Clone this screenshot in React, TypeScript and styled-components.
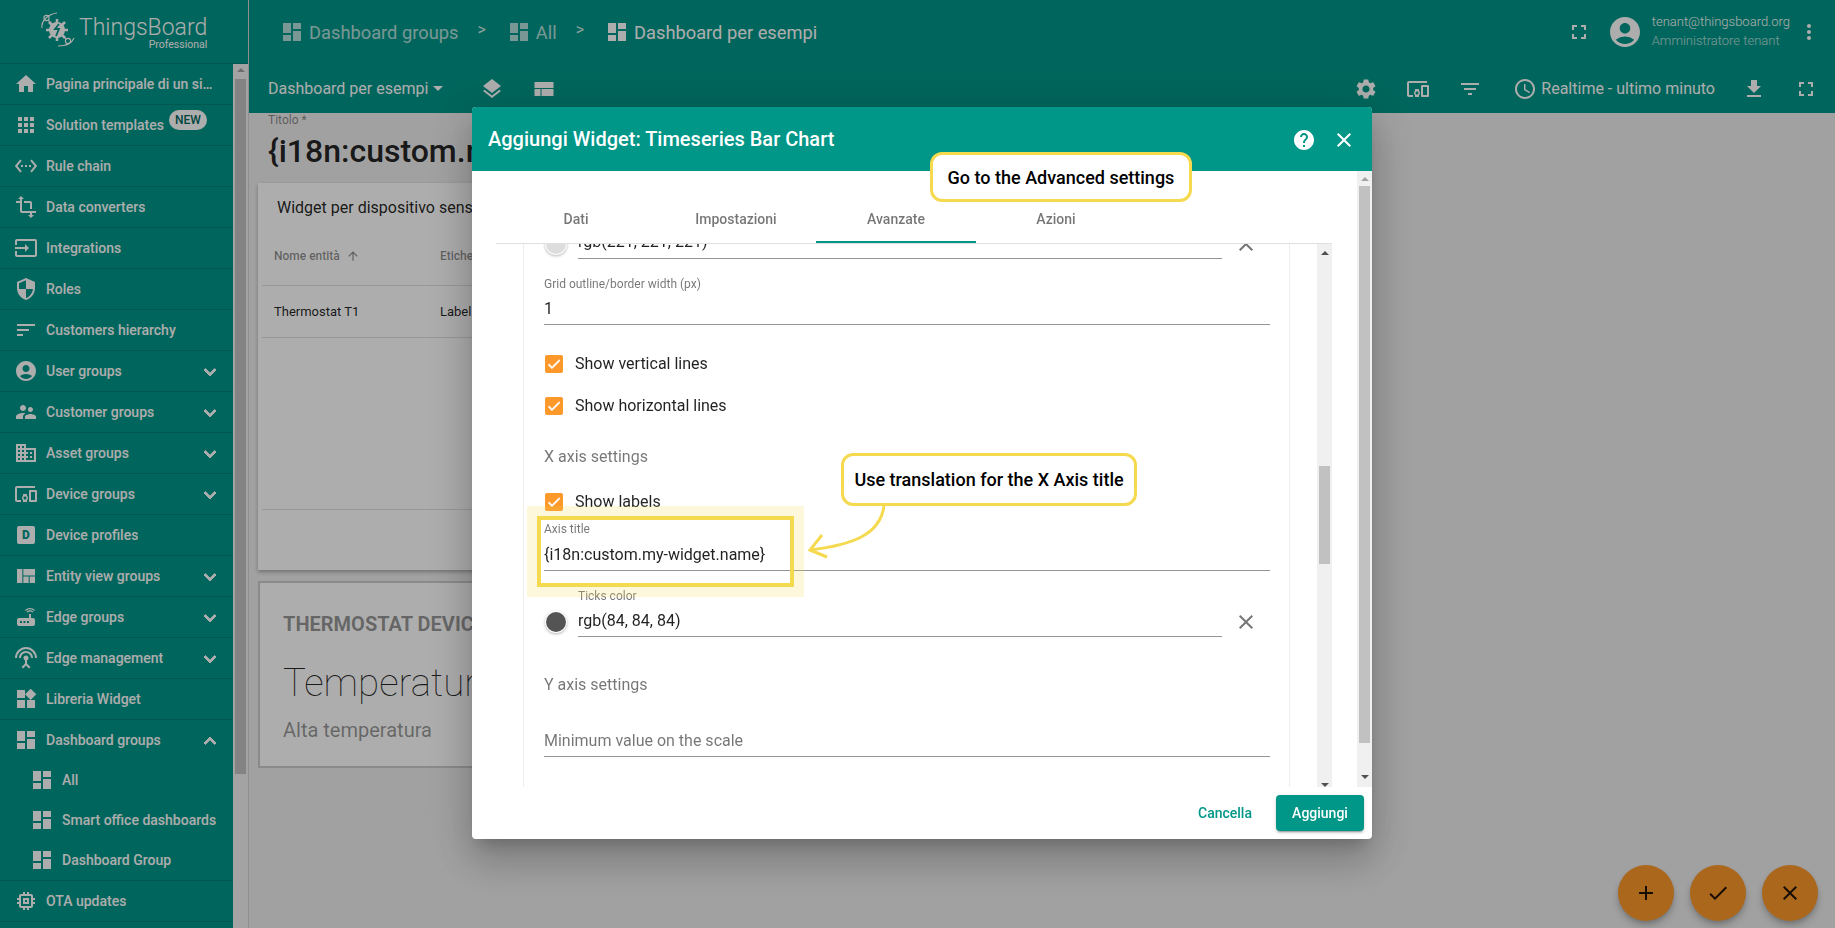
import React from 'react';
import styled, { createGlobalStyle } from 'styled-components';
import {
  MdAccessTime,
  MdAccountCircle,
  MdAdd,
  MdApps,
  MdArrowUpward,
  MdCheck,
  MdClose,
  MdDashboard,
  MdDevicesOther,
  MdDomain,
  MdExpandLess,
  MdExpandMore,
  MdFileDownload,
  MdFilterList,
  MdFullscreen,
  MdHelp,
  MdHome,
  MdInput,
  MdLayers,
  MdMemory,
  MdMoreVert,
  MdRouter,
  MdSecurity,
  MdSettings,
  MdSettingsEthernet,
  MdSettingsInputAntenna,
  MdSort,
  MdSupervisorAccount,
  MdTransform,
  MdViewQuilt,
  MdWidgets,
} from 'react-icons/md';

const GlobalStyle = createGlobalStyle`
  html, body {
    margin: 0;
    height: 100%;
    overflow: hidden;
    font-family: Roboto, "Liberation Sans", sans-serif;
    background: #eeeeee;
  }
  * { box-sizing: border-box; }
`;

const Page = styled.div`
  display: flex;
  width: 1835px;
  height: 928px;
  overflow: hidden;
  position: relative;
`;

/* sidebar */

const Sidebar = styled.aside`
  width: 249px;
  flex: none;
  display: flex;
  flex-direction: column;
  border-right: 1px solid rgba(0, 0, 0, 0.12);
`;

const LogoBar = styled.div`
  height: 64px;
  flex: none;
  background: #009688;
  border-bottom: 1px solid rgba(0, 0, 0, 0.12);
  display: flex;
  align-items: flex-start;
  padding: 11px 0 0 40px;
  color: #fff;
`;

const LogoText = styled.div`
  margin: 4px 0 0 3px;
  display: flex;
  flex-direction: column;
  align-items: flex-end;
`;

const LogoName = styled.span`
  font-size: 23px;
  font-weight: 300;
  line-height: 26px;
`;

const LogoEdition = styled.span`
  font-size: 10.5px;
  line-height: 12px;
  margin-top: -2px;
`;

const SideBody = styled.div`
  flex: 1;
  display: flex;
  min-height: 0;
`;

const Nav = styled.nav`
  width: 233px;
  flex: none;
  background: #009688;
`;

const NavRow = styled.div<{ $open?: boolean }>`
  height: ${(p) => (p.$open ? 40 : 41)}px;
  display: flex;
  align-items: center;
  border-bottom: ${(p) => (p.$open ? 'none' : '1px solid rgba(0, 0, 0, 0.12)')};
  padding-left: 14px;
  color: #fff;
  font-size: 14px;
  font-weight: 500;
  position: relative;
`;

const NavLabel = styled.span`
  margin-left: 8px;
  white-space: nowrap;
  overflow: hidden;
  text-overflow: ellipsis;
  max-width: 167px;
`;

const NavChevron = styled.span`
  position: absolute;
  right: 11px;
  top: 9px;
  display: flex;

  path:not([fill='none']) {
    stroke: currentColor;
    stroke-width: 1;
  }
`;

const SubList = styled.div`
  border-bottom: 1px solid rgba(0, 0, 0, 0.12);
`;

const SubRow = styled.div`
  height: 40px;
  display: flex;
  align-items: center;
  padding-left: 30px;
  color: #fff;
  font-size: 14px;
  font-weight: 500;
`;

const NewBadge = styled.span`
  position: absolute;
  left: 169px;
  top: 5px;
  width: 38px;
  height: 20px;
  border-radius: 10px;
  background: #fff;
  color: #00665c;
  font-size: 12px;
  line-height: 20px;
  text-align: center;
`;

const ProfileBox = styled.span`
  width: 18px;
  height: 18px;
  margin: 3px;
  flex: none;
  border-radius: 2px;
  background: #fff;
  color: #009688;
  font-size: 12px;
  font-weight: 900;
  line-height: 18px;
  text-align: center;
`;

const SideScroll = styled.div`
  width: 15px;
  flex: none;
  background: #f1f1f1;
  padding: 4px 2px 0;
  display: flex;
  flex-direction: column;
  align-items: center;
`;

const ArrowUp = styled.span<{ $color?: string }>`
  width: 0;
  height: 0;
  border-left: 4px solid transparent;
  border-right: 4px solid transparent;
  border-bottom: 4px solid ${(p) => p.$color ?? '#a3a3a3'};
`;

const ArrowDown = styled.span<{ $color?: string }>`
  width: 0;
  height: 0;
  border-left: 4px solid transparent;
  border-right: 4px solid transparent;
  border-top: 4px solid ${(p) => p.$color ?? '#505050'};
`;

const SideThumb = styled.div`
  width: 11px;
  height: 695px;
  margin-top: 7px;
  background: #c1c1c1;
`;

/* top bars */

const Main = styled.main`
  flex: 1;
  min-width: 0;
  display: flex;
  flex-direction: column;
`;

const TopBar = styled.header`
  height: 64px;
  flex: none;
  background: #009688;
  color: #fff;
  display: flex;
  align-items: center;
  padding: 0 14px 0 31px;
`;

const Crumb = styled.span<{ $current?: boolean }>`
  display: flex;
  align-items: center;
  gap: 5px;
  font-size: 18.3px;
  opacity: ${(p) => (p.$current ? 1 : 0.7)};
`;

const CrumbSep = styled.span`
  font-size: 16px;
  margin: -6px 21px 0 19px;
  opacity: 0.8;
`;

const Spacer = styled.div`
  flex: 1;
`;

const UserBox = styled.div`
  display: flex;
  flex-direction: column;
  gap: 4px;
  margin: -3px 7px 0 9px;
  font-size: 13px;
  font-weight: 300;
  line-height: 15px;
`;

const UserRole = styled.span`
  opacity: 0.7;
  font-size: 13px;
`;

const IconSlot = styled.span<{ $gap?: number; $drop?: number }>`
  display: flex;
  margin-left: ${(p) => p.$gap ?? 0}px;
  margin-top: ${(p) => p.$drop ?? 0}px;
`;

const ToolBar = styled.div`
  height: 49px;
  flex: none;
  background: #009688;
  color: #fff;
  display: flex;
  align-items: center;
  padding: 0 17px 0 19px;
  font-size: 16px;
`;

const Caret = styled.span`
  width: 0;
  height: 0;
  margin-left: 5px;
  border-left: 5px solid transparent;
  border-right: 5px solid transparent;
  border-top: 5px solid #fff;
`;

/* page behind the dialog */

const Content = styled.div`
  flex: 1;
  padding: 0 0 0 9px;
  background: #eeeeee;
  min-height: 0;
`;

const TitleLabel = styled.div`
  margin: 0 0 0 10px;
  height: 14px;
  font-size: 12px;
  line-height: 14px;
  color: rgba(0, 0, 0, 0.45);
`;

const BigTitle = styled.div`
  margin: 3px 0 0 10px;
  height: 42px;
  font-size: 32px;
  font-weight: 500;
  line-height: 42px;
  color: rgba(0, 0, 0, 0.87);
  white-space: nowrap;
`;

const TableCard = styled.section`
  width: 520px;
  height: 387px;
  margin-top: 11px;
  background: #fff;
  box-shadow: 0 2px 4px rgba(0, 0, 0, 0.3);
  display: flex;
  flex-direction: column;
`;

const CardTitle = styled.div`
  padding: 15px 0 0 19px;
  height: 50px;
  font-size: 16px;
  line-height: 20px;
  color: rgba(0, 0, 0, 0.87);
`;

const TableLine = styled.div<{ $h: number; $muted?: boolean }>`
  height: ${(p) => p.$h}px;
  margin-left: 4px;
  padding-left: 12px;
  padding-bottom: ${(p) => (p.$muted ? 6 : 0)}px;
  display: flex;
  align-items: center;
  border-bottom: 1px solid rgba(0, 0, 0, 0.12);
  font-size: ${(p) => (p.$muted ? 12 : 13)}px;
  font-weight: ${(p) => (p.$muted ? 500 : 400)};
  color: ${(p) => (p.$muted ? 'rgba(0, 0, 0, 0.45)' : 'rgba(0, 0, 0, 0.87)')};
`;

const TableCell = styled.span`
  width: 166px;
  display: flex;
  align-items: center;
  gap: 6px;
`;

const ValueCard = styled.section`
  width: 520px;
  height: 187px;
  margin-top: 11px;
  border: 2px solid rgba(0, 0, 0, 0.2);
  background: #fff;
  padding: 27px 0 0 23px;
  white-space: nowrap;
`;

const ValueHeading = styled.div`
  font-size: 20px;
  font-weight: 700;
  line-height: 28px;
  color: rgba(0, 0, 0, 0.42);
`;

const ValueNumber = styled.div`
  margin-top: 20px;
  font-size: 38.5px;
  font-weight: 100;
  line-height: 50px;
  color: rgba(0, 0, 0, 0.87);
`;

const ValueNote = styled.div`
  margin-top: 8px;
  font-size: 20px;
  line-height: 28px;
  color: rgba(0, 0, 0, 0.42);
`;

const FabGroup = styled.div`
  position: absolute;
  right: 17px;
  bottom: 7px;
  display: flex;
  gap: 16px;
`;

const Fab = styled.button`
  width: 56px;
  height: 56px;
  padding: 0;
  border: 0;
  border-radius: 50%;
  background: #fd982a;
  color: rgba(0, 0, 0, 0.87);
  display: flex;
  align-items: center;
  justify-content: center;
  box-shadow: 0 3px 5px -1px rgba(0, 0, 0, 0.2), 0 6px 10px rgba(0, 0, 0, 0.14);
`;

/* dialog */

const Backdrop = styled.div`
  position: fixed;
  inset: 0;
  background: rgba(0, 0, 0, 0.32);
  padding: 18px 0 0 9px;
  display: flex;
  align-items: center;
  justify-content: center;
`;

const Dialog = styled.div`
  position: relative;
  width: 900px;
  height: 732px;
  display: flex;
  flex-direction: column;
  background: #fff;
  border-radius: 4px;
  box-shadow: 0 11px 15px -7px rgba(0, 0, 0, 0.2), 0 24px 38px 3px rgba(0, 0, 0, 0.14),
    0 9px 46px 8px rgba(0, 0, 0, 0.12);
`;

const DialogHeader = styled.div`
  height: 64px;
  flex: none;
  background: #009688;
  color: #fff;
  border-radius: 4px 4px 0 0;
  display: flex;
  align-items: center;
  padding: 0 16px;
  font-size: 20px;
  font-weight: 500;
`;

const DialogTitle = styled.span`
  flex: 1;
`;

const DialogBody = styled.div`
  height: 616px;
  flex: none;
  display: flex;
`;

const BodyColumn = styled.div`
  width: 885px;
  flex: none;
  padding: 0 25px 0 24px;
  display: flex;
  flex-direction: column;
`;

const TabBar = styled.div`
  height: 73px;
  flex: none;
  padding-top: 24px;
  display: flex;
  border-bottom: 1px solid #e0e0e0;
`;

const Tab = styled.div<{ $active?: boolean }>`
  width: 160px;
  height: 48px;
  padding-top: 2px;
  display: flex;
  align-items: center;
  justify-content: center;
  font-size: 14px;
  font-weight: 500;
  color: rgba(0, 0, 0, 0.54);
  border-bottom: 2px solid ${(p) => (p.$active ? '#009688' : 'transparent')};
`;

const TabPane = styled.div`
  flex: 1;
  min-height: 0;
  display: flex;
  justify-content: space-between;
  overflow: hidden;
  padding-left: 27px;
`;

const SettingsPanel = styled.div`
  width: 767px;
  border-left: 1px solid #eeeeee;
  border-right: 1px solid #eeeeee;
  padding: 0 19px 0 20px;
`;

const Field = styled.div<{ $top: number; $gap?: number }>`
  margin-top: ${(p) => p.$top}px;
  display: flex;
  flex-direction: column;
  gap: ${(p) => p.$gap ?? 5}px;
  flex: 1;
  border-bottom: 1px solid rgba(0, 0, 0, 0.42);
`;

const FieldLabel = styled.label`
  font-size: 12px;
  line-height: 14px;
  color: rgba(0, 0, 0, 0.54);
`;

const FieldValue = styled.div<{ $placeholder?: boolean; $tight?: boolean }>`
  height: ${(p) => (p.$tight ? 27 : 28)}px;
  font-size: 16px;
  line-height: 24px;
  color: ${(p) => (p.$placeholder ? 'rgba(0, 0, 0, 0.54)' : 'rgba(0, 0, 0, 0.87)')};
`;

const ColorRow = styled.div<{ $top: number }>`
  margin-top: ${(p) => p.$top}px;
  display: flex;
  align-items: flex-end;
  position: relative;
`;

const Swatch = styled.span<{ $color: string }>`
  width: 20px;
  height: 20px;
  flex: none;
  margin: 0 12px 5px 2px;
  border-radius: 50%;
  background: ${(p) => p.$color};
  box-shadow: 0 0 0 1px #fff, 0 1px 3px 1px rgba(0, 0, 0, 0.3);
`;

const ClearButton = styled.span`
  width: 48px;
  flex: none;
  margin-bottom: 3px;
  display: flex;
  justify-content: center;
  color: rgba(0, 0, 0, 0.54);
`;

const CheckRow = styled.div<{ $top: number }>`
  margin-top: ${(p) => p.$top}px;
  height: 18px;
  display: flex;
  align-items: center;
  gap: 12px;
  padding-left: 1px;
  font-size: 16px;
  color: rgba(0, 0, 0, 0.87);
`;

const CheckLabel = styled.span`
  margin-top: -2px;
`;

const CheckBox = styled.span`
  width: 18px;
  height: 18px;
  border-radius: 2px;
  background: #fd982a;
  color: #fff;
  display: flex;
  align-items: center;
  justify-content: center;

  path:not([fill='none']) {
    stroke: currentColor;
    stroke-width: 1;
  }
`;

const GroupTitle = styled.div<{ $top: number }>`
  margin-top: ${(p) => p.$top}px;
  font-size: 16px;
  line-height: 24px;
  color: rgba(0, 0, 0, 0.54);
`;

const InnerScroll = styled.div`
  width: 15px;
  flex: none;
  background: #f0f0f0;
  padding-top: 7px;
  display: flex;
  flex-direction: column;
  align-items: center;
  position: relative;
`;

const InnerThumb = styled.div`
  width: 11px;
  height: 98px;
  margin-top: 211px;
  background: #c1c1c1;
`;

const InnerDown = styled.div`
  margin-top: auto;
  display: flex;
`;

const OuterScroll = styled.div`
  width: 15px;
  flex: none;
  background: #f0f0f0;
  padding: 6px 0 8px;
  display: flex;
  flex-direction: column;
  align-items: center;
`;

const OuterThumb = styled.div`
  width: 11px;
  height: 557px;
  margin-top: 5px;
  background: #c1c1c1;
`;

const DialogFooter = styled.div`
  height: 52px;
  flex: none;
  display: flex;
  align-items: center;
  justify-content: flex-end;
  gap: 8px;
  padding: 0 8px;
`;

const TextButton = styled.button`
  height: 36px;
  padding: 0 16px;
  border: 0;
  background: transparent;
  color: #009688;
  font: 500 14px Roboto, sans-serif;
`;

const RaisedButton = styled.button`
  width: 88px;
  height: 36px;
  border: 0;
  border-radius: 4px;
  background: #009688;
  color: #fff;
  font: 500 14px Roboto, sans-serif;
  box-shadow: 0 3px 1px -2px rgba(0, 0, 0, 0.2), 0 2px 2px rgba(0, 0, 0, 0.14),
    0 1px 5px rgba(0, 0, 0, 0.12);
`;

/* tutorial marks painted over the dialog */

const Callout = styled.div<{ $left: number; $top: number; $w: number; $h: number }>`
  position: absolute;
  left: ${(p) => p.$left}px;
  top: ${(p) => p.$top}px;
  width: ${(p) => p.$w}px;
  height: ${(p) => p.$h}px;
  border: 3px solid #f5d94e;
  border-radius: 12px;
  background: #fff;
  color: #000;
  font-size: 18px;
  font-weight: 500;
  display: flex;
  align-items: center;
  justify-content: center;
  white-space: nowrap;
`;

const Highlight = styled.div`
  position: absolute;
  left: 65px;
  top: 409px;
  width: 257px;
  height: 71px;
  border: 4px solid #f5d94e;
  box-shadow: 0 0 0 10px rgba(245, 217, 78, 0.2);
  pointer-events: none;
`;

const ArrowMark = styled.svg`
  position: absolute;
  left: 330px;
  top: 396px;
  overflow: visible;
`;

const ThingsBoardMark = () => (
  <svg width="36" height="36" viewBox="0 0 36 36" fill="none" stroke="#fff">
    <path d="M2 17C1 10 8 3 17 2" strokeWidth="1.1" />
    <circle cx="6.5" cy="7" r="2.6" strokeWidth="1.1" />
    <path d="M34 27C32 32 26 35 18 35" strokeWidth="1.1" />
    <circle cx="28" cy="30" r="2.6" strokeWidth="1.1" />
    <path d="M8 9l4 4M26 28l-3-4" strokeWidth="1.1" />
    <circle cx="17" cy="19" r="8" fill="#fff" stroke="none" />
    <path
      d="M17 8v4M17 26v4M6 19h4M24 19h4M9 11l3 3M22 24l3 3M25 11l-3 3M12 24l-3 3"
      strokeWidth="2.6"
    />
    <path d="M19 13l-4 5h4l-3 7" stroke="#009688" strokeWidth="1.8" />
  </svg>
);

const LayoutIcon = () => (
  <svg width="24" height="24" viewBox="0 0 24 24" fill="currentColor">
    <rect x="2.5" y="5" width="19" height="6" />
    <rect x="2.5" y="12" width="6" height="7" />
    <rect x="9.5" y="12" width="12" height="7" />
  </svg>
);

const navTop = [
  { label: 'Pagina principale di un sistema', icon: <MdHome size={24} /> },
  { label: 'Solution templates', icon: <MdApps size={24} />, badge: true },
  { label: 'Rule chain', icon: <MdSettingsEthernet size={24} /> },
  { label: 'Data converters', icon: <MdTransform size={24} /> },
  { label: 'Integrations', icon: <MdInput size={24} /> },
  { label: 'Roles', icon: <MdSecurity size={24} /> },
  { label: 'Customers hierarchy', icon: <MdSort size={24} /> },
  { label: 'User groups', icon: <MdAccountCircle size={24} />, more: true },
  { label: 'Customer groups', icon: <MdSupervisorAccount size={24} />, more: true },
  { label: 'Asset groups', icon: <MdDomain size={24} />, more: true },
  { label: 'Device groups', icon: <MdDevicesOther size={24} />, more: true },
  { label: 'Device profiles', icon: <ProfileBox>D</ProfileBox> },
  { label: 'Entity view groups', icon: <MdViewQuilt size={24} />, more: true },
  { label: 'Edge groups', icon: <MdRouter size={24} />, more: true },
  { label: 'Edge management', icon: <MdSettingsInputAntenna size={24} />, more: true },
  { label: 'Libreria Widget', icon: <MdWidgets size={24} /> },
];

const subItems = ['All', 'Smart office dashboards', 'Dashboard Group'];

const App: React.FC = () => (
  <Page>
    <GlobalStyle />
    <Sidebar>
      <LogoBar>
        <ThingsBoardMark />
        <LogoText>
          <LogoName>ThingsBoard</LogoName>
          <LogoEdition>Professional</LogoEdition>
        </LogoText>
      </LogoBar>
      <SideBody>
        <Nav>
          {navTop.map((item) => (
            <NavRow key={item.label}>
              {item.icon}
              <NavLabel>{item.label}</NavLabel>
              {item.badge && <NewBadge>NEW</NewBadge>}
              {item.more && (
                <NavChevron>
                  <MdExpandMore size={24} />
                </NavChevron>
              )}
            </NavRow>
          ))}
          <NavRow $open>
            <MdDashboard size={24} />
            <NavLabel>Dashboard groups</NavLabel>
            <NavChevron>
              <MdExpandLess size={24} />
            </NavChevron>
          </NavRow>
          <SubList>
            {subItems.map((sub) => (
              <SubRow key={sub}>
                <MdDashboard size={24} />
                <NavLabel>{sub}</NavLabel>
              </SubRow>
            ))}
          </SubList>
          <NavRow>
            <MdMemory size={24} />
            <NavLabel>OTA updates</NavLabel>
          </NavRow>
        </Nav>
        <SideScroll>
          <ArrowUp />
          <SideThumb />
        </SideScroll>
      </SideBody>
    </Sidebar>

    <Main>
      <TopBar>
        <Crumb>
          <MdDashboard size={24} />
          Dashboard groups
        </Crumb>
        <CrumbSep>&gt;</CrumbSep>
        <Crumb>
          <MdDashboard size={24} />
          All
        </Crumb>
        <CrumbSep>&gt;</CrumbSep>
        <Crumb $current>
          <MdDashboard size={24} />
          Dashboard per esempi
        </Crumb>
        <Spacer />
        <MdFullscreen size={24} />
        <IconSlot $gap={16}>
          <MdAccountCircle size={36} />
        </IconSlot>
        <UserBox>
          <span>tenant@thingsboard.org</span>
          <UserRole>Amministratore tenant</UserRole>
        </UserBox>
        <MdMoreVert size={24} />
      </TopBar>
      <ToolBar>
        Dashboard per esempi
        <Caret />
        <IconSlot $gap={37}>
          <MdLayers size={24} />
        </IconSlot>
        <IconSlot $gap={28}>
          <LayoutIcon />
        </IconSlot>
        <Spacer />
        <MdSettings size={24} />
        <IconSlot $gap={28}>
          <MdDevicesOther size={24} />
        </IconSlot>
        <IconSlot $gap={28}>
          <MdFilterList size={24} />
        </IconSlot>
        <IconSlot $gap={31}>
          <MdAccessTime size={24} />
        </IconSlot>
        <IconSlot $gap={4}>Realtime - ultimo minuto</IconSlot>
        <IconSlot $gap={27}>
          <MdFileDownload size={24} />
        </IconSlot>
        <IconSlot $gap={28}>
          <MdFullscreen size={24} />
        </IconSlot>
      </ToolBar>
      <Content>
        <TitleLabel>Titolo *</TitleLabel>
        <BigTitle>{'{i18n:custom.my-widget.name}'}</BigTitle>
        <TableCard>
          <CardTitle>Widget per dispositivo sensore</CardTitle>
          <TableLine $h={53} $muted>
            <TableCell>
              Nome entità <MdArrowUpward size={14} />
            </TableCell>
            <TableCell>Etichetta</TableCell>
          </TableLine>
          <TableLine $h={52}>
            <TableCell>Thermostat T1</TableCell>
            <TableCell>Label</TableCell>
          </TableLine>
          <TableLine $h={172} />
        </TableCard>
        <ValueCard>
          <ValueHeading>THERMOSTAT DEVICE</ValueHeading>
          <ValueNumber>Temperatura</ValueNumber>
          <ValueNote>Alta temperatura</ValueNote>
        </ValueCard>
      </Content>
    </Main>

    <FabGroup>
      <Fab>
        <MdAdd size={24} />
      </Fab>
      <Fab>
        <MdCheck size={24} />
      </Fab>
      <Fab>
        <MdClose size={24} />
      </Fab>
    </FabGroup>

    <Backdrop>
      <Dialog>
        <DialogHeader>
          <DialogTitle>Aggiungi Widget: Timeseries Bar Chart</DialogTitle>
          <IconSlot $drop={2}>
            <MdHelp size={24} />
          </IconSlot>
          <IconSlot $gap={16} $drop={2}>
            <MdClose size={24} />
          </IconSlot>
        </DialogHeader>
        <DialogBody>
          <BodyColumn>
            <TabBar>
              <Tab>Dati</Tab>
              <Tab>Impostazioni</Tab>
              <Tab $active>Avanzate</Tab>
              <Tab>Azioni</Tab>
            </TabBar>
            <TabPane>
              <SettingsPanel>
                <ColorRow $top={-33}>
                  <Swatch $color="#dddddd" />
                  <Field $top={0}>
                    <FieldLabel>Grid color</FieldLabel>
                    <FieldValue>rgb(221, 221, 221)</FieldValue>
                  </Field>
                  <ClearButton>
                    <MdClose size={24} />
                  </ClearButton>
                </ColorRow>
                <Field $top={18} $gap={6}>
                  <FieldLabel>Grid outline/border width (px)</FieldLabel>
                  <FieldValue $tight>1</FieldValue>
                </Field>
                <CheckRow $top={30}>
                  <CheckBox>
                    <MdCheck size={16} />
                  </CheckBox>
                  <CheckLabel>Show vertical lines</CheckLabel>
                </CheckRow>
                <CheckRow $top={24}>
                  <CheckBox>
                    <MdCheck size={16} />
                  </CheckBox>
                  <CheckLabel>Show horizontal lines</CheckLabel>
                </CheckRow>
                <GroupTitle $top={30}>X axis settings</GroupTitle>
                <CheckRow $top={24}>
                  <CheckBox>
                    <MdCheck size={16} />
                  </CheckBox>
                  <CheckLabel>Show labels</CheckLabel>
                </CheckRow>
                <Field $top={11} $gap={7}>
                  <FieldLabel>Axis title</FieldLabel>
                  <FieldValue $tight>{'{i18n:custom.my-widget.name}'}</FieldValue>
                </Field>
                <ColorRow $top={18}>
                  <Swatch $color="#545454" />
                  <Field $top={0} $gap={6}>
                    <FieldLabel>Ticks color</FieldLabel>
                    <FieldValue $tight>rgb(84, 84, 84)</FieldValue>
                  </Field>
                  <ClearButton>
                    <MdClose size={24} />
                  </ClearButton>
                </ColorRow>
                <GroupTitle $top={36}>Y axis settings</GroupTitle>
                <Field $top={32}>
                  <FieldValue $placeholder $tight>
                    Minimum value on the scale
                  </FieldValue>
                </Field>
              </SettingsPanel>
              <InnerScroll>
                <ArrowUp $color="#505050" />
                <InnerThumb />
                <InnerDown>
                  <ArrowDown />
                </InnerDown>
              </InnerScroll>
            </TabPane>
          </BodyColumn>
          <OuterScroll>
            <ArrowUp />
            <OuterThumb />
            <InnerDown>
              <ArrowDown />
            </InnerDown>
          </OuterScroll>
        </DialogBody>
        <DialogFooter>
          <TextButton>Cancella</TextButton>
          <RaisedButton>Aggiungi</RaisedButton>
        </DialogFooter>

        <Highlight />
        <ArrowMark width="60" height="50" viewBox="0 0 60 50" fill="none" stroke="#f5d94e">
          <path d="M82 3C78 32 50 42 8 47" strokeWidth="3" />
          <path d="M20 32L8 47l17 7" strokeWidth="3" />
        </ArrowMark>
        <Callout $left={458} $top={45} $w={262} $h={50}>
          Go to the Advanced settings
        </Callout>
        <Callout $left={369} $top={346} $w={296} $h={53}>
          Use translation for the X Axis title
        </Callout>
      </Dialog>
    </Backdrop>
  </Page>
);

export default App;
